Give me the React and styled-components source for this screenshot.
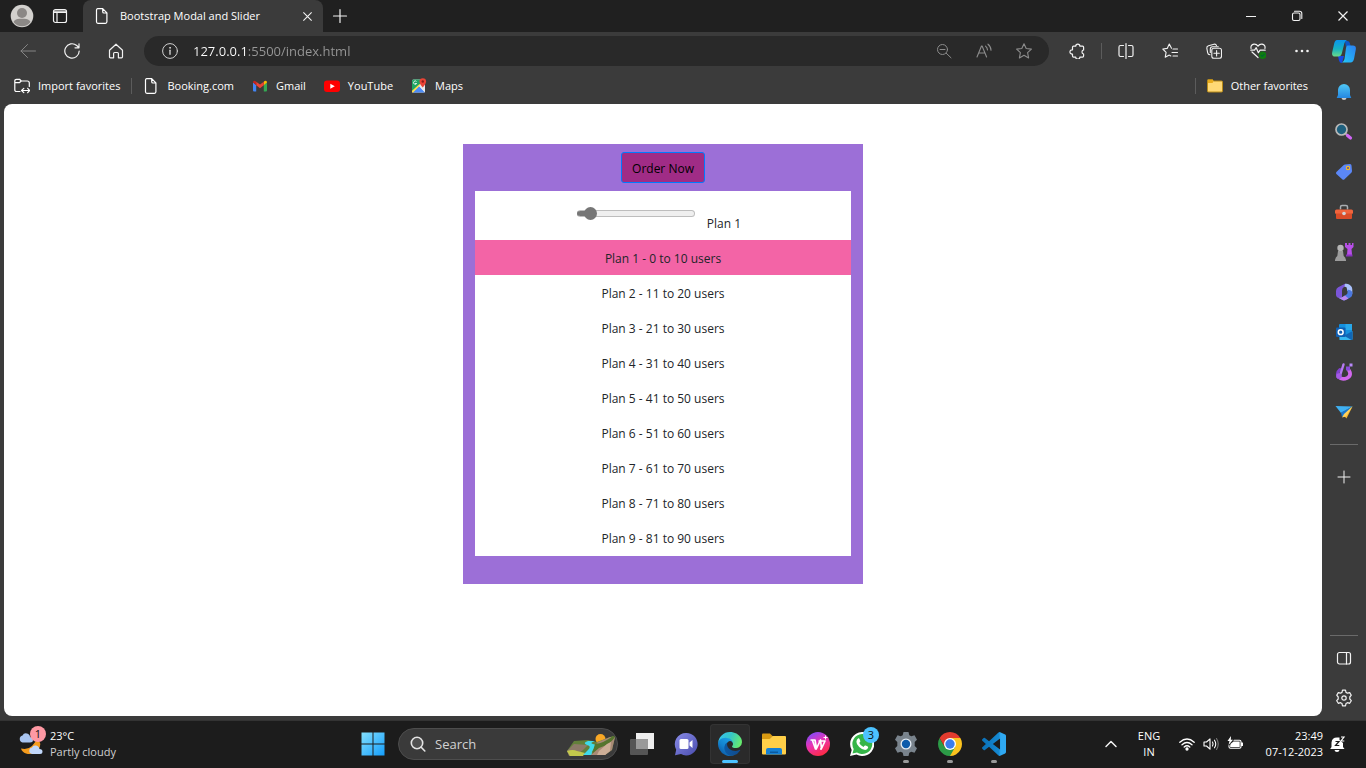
import React, { useState } from "react";
import styled, { createGlobalStyle } from "styled-components";

const GlobalStyle = createGlobalStyle`
  *, *::before, *::after { box-sizing: border-box; }
  body {
    margin: 0;
    background: #3b3b3b;
    color: #fff;
    font-family: "Open Sans", "Noto Sans", sans-serif;
    font-size: 11px;
    line-height: 16px;
  }
  button, input { font: inherit; color: inherit; }
  button { border: 0; padding: 0; background: none; }
  a { color: inherit; text-decoration: none; }
  ul { list-style: none; margin: 0; padding: 0; }
  svg { display: block; flex: none; }
`;

/* ---------- layout ---------- */

const Desktop = styled.div`
  display: flex;
  flex-direction: column;
  min-height: 100vh;
`;

const TabStrip = styled.header`
  display: flex;
  align-items: stretch;
  height: 32px;
  background: #202020;
`;

const IconButton = styled.button`
  display: flex;
  align-items: center;
  justify-content: center;
  flex: none;
  width: ${(p) => p.$w || 40}px;
  height: ${(p) => (p.$h ? `${p.$h}px` : "auto")};
  color: ${(p) => p.$color || "#f2f2f2"};
`;

const Tab = styled.div`
  display: flex;
  align-items: center;
  gap: 10px;
  width: 240px;
  margin-left: 7px;
  padding: 0 8px 0 11px;
  background: #3b3b3b;
  border-radius: 8px 8px 0 0;
`;

const TabTitle = styled.span`
  flex: 1;
  white-space: nowrap;
`;

const WindowControls = styled.div`
  display: flex;
  margin-left: auto;
`;

const BrowserBody = styled.div`
  display: flex;
  flex: 1;
`;

const BrowserMain = styled.div`
  display: flex;
  flex-direction: column;
  flex: 1;
  min-width: 0;
`;

const Toolbar = styled.nav`
  display: flex;
  align-items: center;
  gap: 4px;
  padding: 4px 0 0 8px;
`;

const AddressBar = styled.div`
  display: flex;
  align-items: center;
  flex: 1;
  height: 30px;
  margin: 0 4px;
  padding: 0 5px 0 6px;
  background: #292929;
  border-radius: 15px;
`;

const AddressInput = styled.input`
  flex: 1;
  min-width: 0;
  height: 30px;
  border: 0;
  padding: 0 0 0 3px;
  outline: 0;
  font-size: 13px;
  background: linear-gradient(90deg, #fff 57px, #989898 57px);
  background-clip: text;
  -webkit-background-clip: text;
  color: transparent;
`;

const Separator = styled.span`
  flex: none;
  width: 1px;
  height: 16px;
  background: #5c5c5c;
`;

const FavoritesBar = styled.nav`
  display: flex;
  align-items: center;
  height: 38px;
  padding: 2px 14px 0 14px;
  gap: 18px;
`;

const Favorite = styled.a`
  display: flex;
  align-items: center;
  gap: 8px;
  white-space: nowrap;
`;

const FavoriteGroup = styled.div`
  display: flex;
  align-items: center;
  gap: 11px;
  margin-left: ${(p) => (p.$end ? "auto" : 0)};
`;

const Page = styled.main`
  flex: 1;
  margin: 0 0 4px 4px;
  padding: 40px 16px;
  background: #fff;
  border-radius: 8px;
`;

const Sidebar = styled.aside`
  display: flex;
  flex-direction: column;
  align-items: center;
  width: 44px;
  padding-bottom: 2px;
`;

const SidebarRule = styled.hr`
  width: 28px;
  height: 1px;
  margin: ${(p) => (p.$bottom ? "auto 0 2px" : "12px 0")};
  border: 0;
  background: #6a6a6a;
`;

/* ---------- plan picker ---------- */

const PlanCard = styled.section`
  display: flex;
  flex-direction: column;
  align-items: center;
  gap: 8px;
  max-width: 400px;
  min-height: 440px;
  margin: 0 auto;
  padding: 8px 12px 28px;
  background: #9c6fd7;
  color: #212529;
  font-size: 12px;
`;

const OrderButton = styled.button`
  height: 31px;
  padding: 2px 10px 0;
  border: 1px solid #007bff;
  border-radius: 3px;
  background: #a02c86;
  color: #000;
`;

const PlanPanel = styled.div`
  display: flex;
  flex-direction: column;
  flex: 1;
  width: 100%;
  background: #fff;
`;

const SliderRow = styled.div`
  display: flex;
  justify-content: center;
  gap: 12px;
  height: 49px;
  padding: 16px 8px 0 0;
`;

const Slider = styled.input`
  appearance: none;
  width: 118px;
  height: 13px;
  margin: 0;
  background: none;
  &::-webkit-slider-runnable-track {
    height: 7px;
    border: 1px solid #bdbdbd;
    border-radius: 4px;
    background: linear-gradient(90deg, #767676 ${(p) => p.$fill}%, #efefef ${(p) => p.$fill}%);
    border-left-color: #767676;
  }
  &::-webkit-slider-thumb {
    appearance: none;
    width: 13px;
    height: 13px;
    margin-top: -4px;
    border-radius: 50%;
    background: #767676;
  }
`;

const SliderLabel = styled.label`
  align-self: flex-end;
  padding-bottom: 8px;
`;

const PlanList = styled.ul`
  display: grid;
  flex: 1;
  grid-auto-rows: 1fr;
`;

const PlanRow = styled.li`
  display: flex;
  align-items: center;
  justify-content: center;
  padding-top: 2px;
  background: ${(p) => (p.$active ? "#f364a6" : "transparent")};
`;

/* ---------- taskbar ---------- */

const Taskbar = styled.footer`
  display: grid;
  grid-template-columns: 1fr auto 1fr;
  align-items: center;
  height: 48px;
  box-shadow: inset 0 1px #333;
  background: #1c1c1c;
`;

const Weather = styled.button`
  display: flex;
  align-items: center;
  justify-self: start;
  gap: 6px;
  padding-left: 18px;
  text-align: left;
`;

const WeatherText = styled.span`
  display: block;
  color: ${(p) => (p.$muted ? "#cfcfcf" : "#fff")};
`;

const Dock = styled.div`
  display: flex;
  align-items: center;
  padding-left: 2px;
`;

const SearchBox = styled.label`
  display: flex;
  align-items: center;
  width: 220px;
  height: 32px;
  margin: 0 2px 0 4px;
  padding: 0 2px 0 11px;
  gap: 9px;
  border: 1px solid #4d4d4d;
  border-radius: 16px;
  background: #3a3a3a;
  input {
    flex: 1;
    min-width: 0;
    padding: 0;
    border: 0;
    outline: 0;
    background: none;
    font-size: 13px;
  }
  input::placeholder { color: #d2d2d2; opacity: 1; }
`;

const DockApp = styled.button`
  position: relative;
  display: flex;
  align-items: center;
  justify-content: center;
  width: 40px;
  height: 40px;
  margin: 0 2px;
  border-radius: 4px;
  background: ${(p) => (p.$state === "active" ? "#2a2a2a" : "transparent")};
  box-shadow: ${(p) => (p.$state === "active" ? "inset 0 0 0 1px #333" : "none")};
  &::after {
    content: "";
    display: ${(p) => (p.$state ? "block" : "none")};
    position: absolute;
    bottom: 1px;
    left: 50%;
    width: ${(p) => (p.$state === "active" ? 16 : 6)}px;
    height: 3px;
    margin-left: ${(p) => (p.$state === "active" ? -8 : -3)}px;
    border-radius: 2px;
    background: ${(p) => (p.$state === "active" ? "#4cc2ff" : "#9a9a9a")};
  }
`;

const IconWithBadge = styled.span`
  position: relative;
  display: block;
`;

const Badge = styled.span`
  position: absolute;
  top: -5px;
  right: ${(p) => (p.$dock ? -5 : -2)}px;
  width: 16px;
  height: 16px;
  border-radius: 50%;
  background: ${(p) => p.$bg};
  color: #111;
  text-align: center;
`;

const Tray = styled.div`
  display: flex;
  align-items: center;
  justify-self: end;
  gap: 18px;
  padding-right: 20px;
`;

const TrayIcons = styled.button`
  display: flex;
  align-items: center;
  gap: 8px;
`;

const TrayText = styled.button`
  min-width: ${(p) => p.$min}px;
  text-align: ${(p) => p.$align || "center"};
  span { display: block; }
`;

const Clock = styled.div`
  display: flex;
  align-items: center;
  gap: 7px;
`;

/* ---------- line icons ---------- */

const Line = ({ size = 16, sw = 1, children, ...rest }) => (
  <svg width={size} height={size} viewBox={`0 0 ${size} ${size}`} fill="none" stroke="currentColor"
    strokeWidth={sw} strokeLinecap="round" strokeLinejoin="round" aria-hidden="true" {...rest}>
    {children}
  </svg>
);

const FileIcon = () => (
  <Line sw={1.2}><path d="M3.5.7h5.2l4.2 4.2v8.900q0 1.500-1.500 1.500H3.900q-1.400 0-1.400-1.500V2.100Q2.500.7 3.900.7ZM8.700.9v2.800q0 1.300 1.300 1.300h2.800" /></Line>
);
const PlusIcon = () => <Line sw={1.2}><path d="M8 1.500v13M1.500 8h13" /></Line>;
const CloseIcon = ({ size = 12 }) => (
  <svg width={size} height={size} viewBox="0 0 12 12" stroke="currentColor" strokeWidth="1.2" aria-hidden="true">
    <path d="M1.500 1.500l9 9M10.500 1.500l-9 9" />
  </svg>
);
const TabActionsIcon = () => (
  <Line sw={1.2}><rect x="1.500" y="1.500" width="13" height="13" rx="2" /><path d="M2 3h12M2 4.300h12M5 5v9.500" /></Line>
);
const ProfileIcon = () => (
  <svg width="24" height="24" viewBox="0 0 24 24" aria-hidden="true">
    <circle cx="12" cy="12" r="11.300" fill="#d3d1ce" />
    <circle cx="12" cy="9" r="5" fill="#8b8886" />
    <path d="M3.500 18q2-3.200 6-3.200h5q4 0 6 3.200a10.500 10.500 0 0 1-17 0Z" fill="#8b8886" />
  </svg>
);
const MinimizeIcon = () => <Line><path d="M3 8.500h10" strokeLinecap="butt" /></Line>;
const RestoreIcon = () => (
  <Line sw={1.1}><rect x="3.500" y="5" width="7.500" height="7.500" rx="1.500" /><path d="M5.500 3.200h5q2.300 0 2.300 2.300v5" /></Line>
);
const BackIcon = () => <Line><path d="M15.500 8H1M7.500 1.500 1 8l6.500 6.500" /></Line>;
const RefreshIcon = () => <Line sw={1.2}><path d="M15.200 8A7.200 7.200 0 1 1 12.700 2.500L14.800 4.500M15 .8v4h-4" /></Line>;
const HomeIcon = () => (
  <Line sw={1.2}><path d="M1.500 7.200 8 1.200l6.500 6v6.600q0 1-1 1h-3.100v-4.300q0-1-1-1H6.600q-1 0-1 1v4.300H2.500q-1 0-1-1Z" /></Line>
);
const InfoIcon = () => (
  <Line><circle cx="8" cy="8" r="7.400" /><path d="M8 7.300v4" strokeWidth="1.400" /><circle cx="8" cy="4.800" r=".5" fill="currentColor" /></Line>
);
const ZoomOutIcon = () => <Line><circle cx="6.500" cy="6.500" r="5" /><path d="M10.300 10.300l4.700 4.500M4 6.500h5" /></Line>;
const ReadAloudIcon = () => (
  <Line sw={1.1}><path d="M1 14 5.500 3h.6l4.500 11M2.800 10h6M9.500 3.200q1.800 1.500 2 3.700M12 1.200q3 2.400 3 6" /></Line>
);
const StarIcon = () => (
  <Line sw={1.1}><path d="M8 .7l2.200 4.800 5.200.6-3.800 3.600 1 5.200L8 12.300l-4.600 2.600 1-5.200L.6 6.100l5.200-.6Z" /></Line>
);
const PuzzleIcon = () => (
  <Line sw={1.2}><path d="M4.500 3.200h2.200a2.100 2.100 0 0 1 4.200 0h2.700q1 0 1 1v2.700a2.100 2.100 0 0 0 0 4.100v2.100q0 1-1 1h-2.700a2.100 2.100 0 0 1-4.200 0H4.500q-1 0-1-1V11a2.100 2.100 0 1 1 0-4.100V4.200q0-1 1-1Z" /></Line>
);
const SplitIcon = () => (
  <Line sw={1.2}><path d="M5.500 2.500h-3Q1 2.500 1 4v8q0 1.500 1.500 1.500h3M10.500 2.500h3Q15 2.500 15 4v8q0 1.500-1.500 1.500h-3M8 .6v14.800" /></Line>
);
const FavoritesIcon = () => (
  <Line sw={1.1}><path d="M9.500 5.300 7.300 1 5.200 5.400.8 6l3.300 3.300-.9 5 4.100-2.200 1.500.9M11 6h4.500M10 9.500h5.500M11 13h4.500" /></Line>
);
const CollectionsIcon = () => (
  <Line sw={1.1}><path d="M4 11.800Q2 11.500 1.700 9.800L.8 5.200Q.6 3.200 2.500 2.700L8 1.200q1.800-.4 2.500 1.300M4.300 9.500V6q0-2.200 2.200-2.200h5.800" /><rect x="5.800" y="5.300" width="9.700" height="10" rx="2" /><path d="M10.600 7.600v5.400M8 10.300h5.300" /></Line>
);
const HeartIcon = () => (
  <Line sw={1.2}>
    <path d="M1 5.500q-.7-3.600 3-4.300 2.500-.2 4 2 1.500-2.200 4-2 3.700.7 3 4.300M2 9l6 5.500M.8 7.200h3.700l1.700-2.500 2.200 5 1.700-2.500h5.100" />
    <circle cx="12.700" cy="12.300" r="3.700" fill="#107c10" stroke="none" />
    <path d="M11.200 12.400l1 1 2-2" stroke="#063" />
  </Line>
);
const DotsIcon = () => (
  <Line><g fill="currentColor" stroke="none"><circle cx="2.500" cy="8" r="1.300" /><circle cx="8" cy="8" r="1.300" /><circle cx="13.500" cy="8" r="1.300" /></g></Line>
);
const ImportIcon = () => (
  <Line sw={1.2}><path d="M6 13.500H2.500Q.8 13.500.8 12V3Q.8 1.300 2.500 1.300h3L7.300 3h6q2 0 2 2v3.500M.8 4.700h4.500L7.300 3M8 12.500h7.500M9.800 10.300l-2.200 2.200 2.200 2.200M13.700 10.300l2 2.200-2 2.200" /></Line>
);
const PanelIcon = () => <Line sw={1.2}><rect x="1.500" y="2.500" width="13" height="11.500" rx="2" /><path d="M10.500 2.500V14" /></Line>;
const GearIcon = () => (
  <Line size={18} sw={1.2}>
    <path d="M7.500 1.200h3l.5 2.200 1.500.8 2.200-.6 1.600 2.600L14.800 8v2l1.500 1.700-1.600 2.600-2.200-.6-1.500.9-.5 2.200h-3L7 14.600l-1.500-.9-2.200.6-1.600-2.600L3.200 10V8L1.700 6.200l1.600-2.600 2.200.6L7 3.400Z" />
    <circle cx="9" cy="9" r="2.200" />
  </Line>
);

/* ---------- favourites icons ---------- */

const GmailIcon = () => (
  <svg width="16" height="16" viewBox="0 0 16 16" aria-hidden="true">
    <path d="M1 4.500 4.200 7v6.500H2q-1 0-1-1Z" fill="#4285f4" />
    <path d="M11.800 7 15 4.500v8q0 1-1 1h-2.200Z" fill="#34a853" />
    <path d="M11.800 3.700l.8-.6Q15 2 15 4.500L11.800 7.200Z" fill="#fbbc04" />
    <path d="M4.200 3.700 8 6.600l3.800-2.900v3.500L8 10.200 4.200 7.200Z" fill="#ea4335" />
    <path d="M1 4.500Q1 2 3.400 3.100l.8.6v3.500Z" fill="#c5221f" />
  </svg>
);
const YouTubeIcon = () => (
  <svg width="16" height="16" viewBox="0 0 16 16" aria-hidden="true">
    <rect y="2.500" width="16" height="11.500" rx="3" fill="#f00" /><path d="M6.300 5.800 10.800 8.200l-4.500 2.500Z" fill="#fff" />
  </svg>
);
const MapsIcon = () => (
  <svg width="16" height="16" viewBox="0 0 16 16" aria-hidden="true">
    <rect x="1" y="1.500" width="13" height="13" rx="1.500" fill="#e8eaed" />
    <path d="M1 3q0-1.500 1.500-1.500H10L9 7 1 14Z" fill="#1fa463" />
    <path d="M1.500 14.500 8 8l6 6.500Z" fill="#4c8bf5" />
    <path d="M1 12.800 8.500 6l1 1L2 14.500H1Z" fill="#ffda48" />
    <path d="M8 8l1-1 5 5.500v2Z" fill="#e8eaed" />
    <path d="M5.500 3.500a1.700 1.700 0 1 0 .2 2H4" fill="none" stroke="#fff" strokeWidth=".8" />
    <path d="M11.700 9.500Q8.500 6 8.500 3.600a3.300 3.300 0 0 1 6.600 0Q15 6 11.700 9.500Z" fill="#ea4335" /><circle cx="11.800" cy="3.500" r="1.200" fill="#8c1d18" />
  </svg>
);
const FolderIcon = () => (
  <svg width="16" height="16" viewBox="0 0 16 16" aria-hidden="true">
    <path d="M.5 13V2.500Q.5 1.500 1.500 1.500h4l1 1.500h8q1 0 1 1V13q0 1-1 1h-13q-1 0-1-1Z" fill="#ffd976" stroke="#b88a18" />
    <path d="M1 2h4.500l1 1.500L5.500 5H1Z" fill="#e8ab1c" />
  </svg>
);

/* ---------- sidebar icons ---------- */

const CopilotIcon = () => (
  <svg width="24" height="24" viewBox="0 0 24 24" aria-hidden="true">
    <defs>
      <linearGradient id="cp1" x1="0" y1="0" x2="0" y2="1"><stop stopColor="#0a95ee" /><stop offset=".55" stopColor="#18b3c0" /><stop offset="1" stopColor="#6bdc88" /></linearGradient>
      <linearGradient id="cp2" x1="1" y1="0" x2="0" y2="1"><stop stopColor="#2b7ff0" /><stop offset="1" stopColor="#22c8f8" /></linearGradient>
    </defs>
    <path d="M6 16h6l-2 7Q7.500 23 7 20.500Z" fill="#174ae4" />
    <path d="M13 1h2.500q1.800 0 2.300 2l1 3.500h-5Z" fill="#0c59c9" />
    <path d="M5 0h10q-2 .8-2.700 3.500L9.800 13.500q-.8 3-3.500 3H3Q-.6 16.500.2 12.300L2.200 3.500Q3 0 5 0Z" fill="url(#cp1)" />
    <path d="M15.500 5.500H21q3.400 0 2.800 4l-1.700 9Q21.300 22.500 18.500 22.500H10q1.800-.8 2.500-3.500L14 8q.3-2.500 1.500-2.500Z" fill="url(#cp2)" />
  </svg>
);
const BellIcon = () => (
  <svg width="16" height="18" viewBox="0 0 16 18" aria-hidden="true">
    <defs><linearGradient id="bell" x1="0" y1="0" x2="0" y2="1"><stop stopColor="#50c8f5" /><stop offset="1" stopColor="#2486e0" /></linearGradient></defs>
    <path d="M2 12V7a6 6 0 0 1 12 0v5L15.300 15H.7Z" fill="url(#bell)" /><path d="M5.500 15h5q-.3 2-2.500 2t-2.500-2Z" fill="#c9c9c9" />
  </svg>
);
const SearchColorIcon = () => (
  <svg width="18" height="18" viewBox="0 0 18 18" aria-hidden="true">
    <path d="M10.500 10.500l2 2" stroke="#aaa" strokeWidth="2" /><path d="M12.500 12.500l3 2.500" stroke="#d065f5" strokeWidth="3.200" strokeLinecap="round" />
    <circle cx="6.500" cy="6.500" r="5.500" fill="#1e607e" stroke="#b9b9b9" strokeWidth="1.700" />
  </svg>
);
const TagIcon = () => (
  <svg width="18" height="18" viewBox="0 0 18 18" aria-hidden="true">
    <path d="M10 1.500 15 1q1.500 0 1.500 1.500L17 8q0 1-.7 1.700L9.500 16.300q-1 1-2 .1L1.400 11q-.9-1 0-2L8.500 2.200q.7-.6 1.500-.7Z" fill="#5b87f7" />
    <circle cx="13" cy="5" r="1.600" fill="#5148b8" stroke="#f5bd23" strokeWidth="1.200" />
  </svg>
);
const ToolboxIcon = () => (
  <svg width="18" height="18" viewBox="0 0 18 18" aria-hidden="true">
    <path d="M5.500 6.500V4Q5.500 2.500 7 2.500h4q1.500 0 1.500 1.500v2.500" fill="none" stroke="#a9adb0" strokeWidth="1.500" />
    <rect y="6.500" width="18" height="4.500" rx="1.500" fill="#f0643c" /><path d="M1 10.500h16v4.500q0 1-1 1H2q-1 0-1-1Z" fill="#d94c28" /><circle cx="9" cy="10.500" r="1.800" fill="#d2d5d8" />
  </svg>
);
const ChessIcon = () => (
  <svg width="20" height="20" viewBox="0 0 20 20" aria-hidden="true">
    <path d="M11 1h2v2h1.500V1h2v2H18V1h1.500v4l-2 2 .6 6H13l.5-6L11 5Z" fill="#b74ee8" />
    <path d="M12 12.500h6.500v2H12Z" fill="#8732bd" />
    <circle cx="6.500" cy="6" r="3.200" fill="#b5b5b5" /><path d="M4 9h5l.7 5q1.700 1 2.300 4v1H1v-1q.6-3 2.300-4Z" fill="#9c9c9c" />
  </svg>
);
const M365Icon = () => (
  <svg width="18" height="18" viewBox="0 0 18 18" aria-hidden="true">
    <path d="M10 .8 3.200 4.300Q1 5.500 1 8v4q.3 3 4 3l2-1V7.500Q7 5 9 4l4-2Z" fill="#7a55d8" />
    <path d="M10 .8q2.500-.6 4.500 1L16 3q1.300 1 1.300 3.500V11L12 7.500V6Q12 3.500 9.500 3.800Z" fill="#a9c1fb" />
    <path d="M17.300 9v2.500q0 2-2 3L10.500 17q-1.500.8-3 0L3 14.600q2.500.6 4.500-.6l4-2.500q1-.7 1-2V6.500l3.300 1Z" fill="#4b78df" />
    <path d="M3 14.600q2.500.6 4.500-.6l2.500-1.500 3.500 3-3 1.500q-1.500.8-3 0Z" fill="#b987ef" />
  </svg>
);
const OutlookIcon = () => (
  <svg width="18" height="18" viewBox="0 0 18 18" aria-hidden="true">
    <rect x="4" y="1" width="13" height="12" rx="1" fill="#1490df" /><path d="M10.500 1H17v6h-6.500Z" fill="#28a8ea" /><path d="M4 8l7 4.500L17.500 8v8q0 1-1 1h-12Z" fill="#35b8f1" /><path d="M17.500 8v8q0 1-1 1L9 12.800Z" fill="#1066b5" />
    <rect x="1" y="4.500" width="9.500" height="9.500" rx="1" fill="#0f5fb3" /><circle cx="5.700" cy="9.200" r="2.400" fill="none" stroke="#fff" strokeWidth="1.500" />
  </svg>
);
const DesignerIcon = () => (
  <svg width="20" height="20" viewBox="0 0 20 20" fill="none" aria-hidden="true">
    <path d="M15 8.500Q17.800 13 13.500 15.800 8 18.300 4.500 15" stroke="#d267ee" strokeWidth="3.600" strokeLinecap="round" />
    <path d="M4.500 15.500Q1.800 11 6 7.500" stroke="#8241d0" strokeWidth="3" strokeLinecap="round" />
    <path d="M9.500 2.500 6.500 12" stroke="#b67af2" strokeWidth="2.400" strokeLinecap="round" /><path d="M12 4.500h4v4h-4Z" fill="#8a4adb" /><path d="M15.500 1.500h3v3h-3Z" fill="#b889fa" />
    <circle cx="5" cy="14" r="2.800" fill="#a45ae5" />
  </svg>
);
const PlaneIcon = () => (
  <svg width="18" height="18" viewBox="0 0 18 18" aria-hidden="true">
    <path d="M.5 3 17.500 3.500 6 10Z" fill="#3fb0f2" /><path d="M17.500 3.500 11.500 15.500 6.500 10Z" fill="#f3b42b" /><path d="M17.500 3.500 6 9.500 7 14Z" fill="#1976ce" /><path d="M17.500 3.500 9 11l-2 3.500 4-1Z" fill="#ffd15c" />
  </svg>
);

/* ---------- taskbar icons ---------- */

const WeatherIcon = () => (
  <svg width="26" height="26" viewBox="0 0 26 26" aria-hidden="true">
    <path d="M19 6q6 7 1 13-5 5.500-12 3.500-4-1.500-5-5 7 1.500 11-2.500T19 6Z" fill="#f49b1c" />
    <path d="M4.500 11.500a3.600 3.600 0 0 1 0-7Q6 1.500 9 2.500q3 1 3 3.500 3 .5 3 3t-3 2.500Z" fill="#a8c4f0" />
    <path d="M14 23a3.300 3.300 0 0 1 0-6.500q1-2.500 4-2 3 .5 3.500 3.500 3 0 3 2.500T22 23Z" fill="#c1d7fa" />
  </svg>
);
const StartIcon = () => (
  <svg width="24" height="24" viewBox="0 0 24 24" aria-hidden="true">
    <defs><linearGradient id="win" x1="0" y1="0" x2="1" y2="1"><stop stopColor="#83dffd" /><stop offset="1" stopColor="#149efc" /></linearGradient></defs>
    <path d="M.5.500h11v11H.5ZM12.500.500h11v11h-11ZM.5 12.500h11v11H.5ZM12.500 12.500h11v11h-11Z" fill="url(#win)" />
  </svg>
);
const SearchIcon = () => (
  <svg width="16" height="16" viewBox="0 0 16 16" fill="none" stroke="#e3e3e3" strokeWidth="1.600" strokeLinecap="round" aria-hidden="true"><circle cx="7" cy="7" r="5.700" fill="#505050" /><path d="M11.200 11.200l3.600 3.800" /></svg>
);
const SceneryIcon = () => (
  <svg width="48" height="24" viewBox="0 0 48 24" aria-hidden="true">
    <circle cx="33.500" cy="7" r="5" fill="#f9a825" />
    <path d="M7 9l14-1 9 2 16-6 2 1-3 13-7 5H2l-2-4Z" fill="#62803a" />
    <path d="M0 19l7-7 14 1-5 5-8 6H2Z" fill="#8c7a68" />
    <path d="M0 19q6-2 10 0l8 2-2 3H3Z" fill="#c3c94c" />
    <path d="M21 9q-6 2-1 4 5 1 1 5l-5 5h9q-1-4 3-7t-2-4q-4-1 2-3Z" fill="#3fdaea" />
    <path d="M29 11 43 5h5l-3 13-7 5H24q4-8 10-9Z" fill="#a98a76" /><path d="M28 12q9-1 18-8l2 1q-4 7-16 11l-7 6Z" fill="#55752e" /><path d="M32 19l8-7 4-2-1 9-5 4h-8Z" fill="#cdae97" />
  </svg>
);
const TaskViewIcon = () => (
  <svg width="24" height="24" viewBox="0 0 24 24" aria-hidden="true">
    <path d="M6 1h18v16H6Z" fill="#eee" /><rect y="7" width="18" height="16" rx="1" fill="#555" /><path d="M6 7h12v10H6Z" fill="#999" />
  </svg>
);
const ChatIcon = () => (
  <svg width="24" height="24" viewBox="0 0 24 24" aria-hidden="true">
    <defs><linearGradient id="chat" x1="0" y1="0" x2="1" y2="1"><stop stopColor="#8a8ce8" /><stop offset="1" stopColor="#494cad" /></linearGradient></defs>
    <path d="M12 1a11.200 11.200 0 1 1-5 21L1 23.200l1.200-5.500A11.200 11.200 0 0 1 12 1Z" fill="url(#chat)" />
    <rect x="5.500" y="7" width="9" height="10" rx="1.500" fill="#fff" /><path d="M15.500 10.500 18.500 8v8l-3-2.500Z" fill="#fff" />
  </svg>
);
const EdgeIcon = () => (
  <svg width="24" height="24" viewBox="0 0 256 256" aria-hidden="true">
    <defs>
      <linearGradient id="eg1" x1="0" y1="0" x2="1" y2="0"><stop stopColor="#0c59a4" /><stop offset="1" stopColor="#114a8b" /></linearGradient>
      <linearGradient id="eg2" x1=".8" y1=".2" x2=".3" y2="1"><stop stopColor="#1b9de2" /><stop offset=".5" stopColor="#1383cf" /><stop offset="1" stopColor="#0c59a4" /></linearGradient>
      <linearGradient id="eg3" x1="0" y1=".2" x2="1" y2=".5"><stop stopColor="#35c1f1" /><stop offset=".5" stopColor="#36c6c5" /><stop offset="1" stopColor="#66eb6e" /></linearGradient>
    </defs>
    <path fill="url(#eg1)" d="M231 190.500c-3.400 1.800-6.900 3.400-10.500 4.700a101.500 101.500 0 0 1-35.900 6.500c-47.300 0-88.500-32.500-88.500-74.300.1-11.400 6.400-21.900 16.400-27.300-42.800 1.800-53.800 46.400-53.800 72.500 0 74 68.100 81.400 82.800 81.400 7.900 0 19.800-2.300 27-4.600l1.300-.4a128.300 128.300 0 0 0 66.600-52.800c1.200-1.900.6-4.300-1.200-5.500-1.300-.8-2.900-.9-4.200-.2z" />
    <path fill="url(#eg2)" d="M105.700 241.400a79.200 79.200 0 0 1-22.700-21.300 80.700 80.700 0 0 1 29.500-120c3.200-1.500 8.500-4.100 15.600-4a32.400 32.400 0 0 1 25.700 13 31.900 31.900 0 0 1 6.300 18.700c0-.2 24.500-79.600-80-79.600-43.900 0-80 41.600-80 78.200-.2 19.300 4 38.500 12.100 56a128 128 0 0 0 156.400 67.100 75.500 75.500 0 0 1-62.800-8z" />
    <path fill="url(#eg3)" d="M152.300 148.900c-.9 1-3.400 2.500-3.400 5.600 0 2.600 1.700 5.200 4.800 7.300 14.300 10 41.400 8.600 41.500 8.600 10.700 0 21.100-2.900 30.300-8.300a61.400 61.400 0 0 0 30.400-52.900c.3-22.400-8-37.300-11.300-43.900C223.500 23.900 177.700 0 128 0A128 128 0 0 0 0 126.200c.5-36.500 36.800-66 80-66 3.500 0 23.500.3 42 10.100 16.300 8.600 24.900 18.900 30.800 29.200 6.200 10.700 7.300 24.100 7.300 29.500 0 5.300-2.700 13.300-7.800 19.900z" />
  </svg>
);
const ExplorerIcon = () => (
  <svg width="24" height="24" viewBox="0 0 24 24" aria-hidden="true">
    <path d="M0 2.500Q0 1.500 1 1.500h7L10.500 4 8 7H0Z" fill="#d99a12" /><path d="M0 7h7.500l3-3H23q1 0 1 1v16.500q0 1-1 1H1q-1 0-1-1Z" fill="#ffcf48" /><path d="M4 22.500V18q0-2 2-2h12q2 0 2 2v4.500Z" fill="#1580d4" /><path d="M8 19.500h8v1.500H8Z" fill="#0b5a9f" />
  </svg>
);
const WpsIcon = () => (
  <svg width="24" height="24" viewBox="0 0 24 24" aria-hidden="true">
    <defs><linearGradient id="wps" x1=".2" y1="0" x2=".7" y2="1"><stop stopColor="#7a4dff" /><stop offset=".45" stopColor="#e833b5" /><stop offset="1" stopColor="#ff2a3c" /></linearGradient></defs>
    <circle cx="12" cy="12" r="12" fill="url(#wps)" />
    <path d="M4.500 8h4.500l1.500 8.500L14.500 8l1 8.500L19 9h-6.500M6.500 8.500 9.500 17h1.500M14 17h2" fill="none" stroke="#fff" strokeWidth="1.700" strokeLinejoin="round" /><path d="M19.500 3.500v4M17.500 5.500h4" stroke="#fff" />
  </svg>
);
const WhatsAppIcon = () => (
  <svg width="24" height="24" viewBox="0 0 24 24" aria-hidden="true">
    <path d="M12 0a12 12 0 1 1-5.500 22.500L0 24l1.700-6A12 12 0 0 1 12 0Z" fill="#fff" /><path d="M12 2a10 10 0 1 1-5 18.500L2.500 21.500 3.700 17A10 10 0 0 1 12 2Z" fill="#35b548" />
    <path d="M8.300 6.300q.8-.2 1.200.7l.8 1.900q.2.700-.3 1.200l-.7.900q1.200 2.700 4.200 4l1-1.200q.5-.6 1.200-.2l2 1q.6.400.4 1.200-.6 2-2.900 2.100-3 0-6-2.900-2.900-2.900-2.800-5.300.1-2.300 1.900-3.400Z" fill="#fff" />
  </svg>
);
const SettingsAppIcon = () => (
  <svg width="24" height="24" viewBox="0 0 24 24" aria-hidden="true">
    <path d="M9.500 0h5l.8 3.200 2 1.100 3.200-1L23 7.700 20.700 10v4l2.300 2.300-2.500 4.400-3.200-1-2 1.100-.8 3.200h-5l-.8-3.200-2-1.100-3.200 1L1 16.300 3.300 14v-4L1 7.700l2.500-4.400 3.200 1 2-1.100Z" fill="#79838c" />
    <circle cx="12" cy="12" r="5.500" fill="#e6edf3" /><circle cx="12" cy="12" r="4.200" fill="#0e5cab" />
  </svg>
);
const ChromeIcon = () => (
  <svg width="24" height="24" viewBox="0 0 24 24" aria-hidden="true">
    <path d="M12 6h10.390A12 12 0 0 1 12 24Z" fill="#fcc31e" />
    <path d="M1.610 6A12 12 0 0 0 12 24l5.200-9L12 12 6.800 15Z" fill="#2c9b47" />
    <path d="M1.610 6 6.800 15 12 12V6h10.390A12 12 0 0 0 1.610 6Z" fill="#e23b2e" />
    <circle cx="12" cy="12" r="6" fill="#fff" /><circle cx="12" cy="12" r="4.700" fill="#3a7cec" />
  </svg>
);
const CodeIcon = () => (
  <svg width="24" height="24" viewBox="0 0 24 24" aria-hidden="true">
    <defs><linearGradient id="code"><stop stopColor="#0a70b8" /><stop offset=".7" stopColor="#1589d1" /><stop offset=".78" stopColor="#2fa9f2" /></linearGradient></defs>
    <path fill="url(#code)" d="M23.150 2.587L18.210.210a1.494 1.494 0 0 0-1.705.290l-9.460 8.630-4.120-3.128a.999.999 0 0 0-1.276.057L.327 7.261A1 1 0 0 0 .326 8.740L3.899 12 .326 15.260a1 1 0 0 0 .001 1.479L1.650 17.940a.999.999 0 0 0 1.276.057l4.120-3.128 9.460 8.630a1.492 1.492 0 0 0 1.704.290l4.942-2.377A1.500 1.500 0 0 0 24 20.060V3.939a1.500 1.500 0 0 0-.850-1.352zm-5.146 14.861L10.826 12l7.178-5.448v10.896z" />
  </svg>
);
const ChevronUpIcon = () => <Line sw={1.5}><path d="M3 10.500l5-5 5 5" /></Line>;
const WifiIcon = () => (
  <Line sw={1.3}><path d="M.8 6.200q7.200-6.500 14.400 0M3 8.700q5-4.400 10 0M5.200 11q2.800-2.500 5.600 0" /><circle cx="8" cy="13" r="1" fill="currentColor" /></Line>
);
const SpeakerIcon = () => (
  <Line sw={1.1}><path d="M1 6h2.500L7 2.800v10.400L3.500 10H1ZM9.500 6q1.200 2 0 4M11.500 4.200q2.500 3.800 0 7.600" /><path d="M13.500 2.500q3.500 5.500 0 11" stroke="#777" /></Line>
);
const BatteryIcon = () => (
  <Line sw={1.1}><path d="M7 4.200h5.500q1.500 0 1.500 1.500v5q0 1.500-1.500 1.500h-9Q2 12.200 2 10.700V9.500M14.500 7v2.500h1V7Z" /><path d="M4 7.500 6.500 5.500H12.700v5.500h-9.500V9Z" fill="currentColor" stroke="none" /><path d="M4 0 .5 5h2L1.500 9 6 3.700H3.800Z" fill="currentColor" stroke="none" /></Line>
);
const QuietBellIcon = () => (
  <svg width="16" height="16" viewBox="0 0 16 16" aria-hidden="true">
    <path d="M1.500 11V6.500Q2 1.500 7 1.500h2.500V4L13 7v4l1.500 2H.2ZM4.500 14h5q-.3 2-2.500 2t-2.500-2Z" fill="#fff" />
    <path d="M5.500 5.500H9L5.500 9.500H9.300" fill="none" stroke="#1c1c1c" strokeWidth="1.200" /><path d="M11 1h3l-3 4h3.300" fill="none" stroke="#fff" strokeWidth="1.200" />
  </svg>
);

/* ---------- data ---------- */

const plans = Array.from({ length: 9 }, (_, i) => ({
  id: i + 1,
  label: `Plan ${i + 1} - ${i === 0 ? 0 : i * 10 + 1} to ${(i + 1) * 10} users`,
}));

const favorites = [
  ["Gmail", GmailIcon],
  ["YouTube", YouTubeIcon],
  ["Maps", MapsIcon],
];

const sidebarApps = [
  ["Copilot", CopilotIcon],
  ["Notifications", BellIcon],
  ["Search", SearchColorIcon],
  ["Shopping", TagIcon],
  ["Tools", ToolboxIcon],
  ["Games", ChessIcon],
  ["Microsoft 365", M365Icon],
  ["Outlook", OutlookIcon],
  ["Designer", DesignerIcon],
  ["Drop", PlaneIcon],
];

const addressActions = [
  ["Zoom", ZoomOutIcon],
  ["Read aloud", ReadAloudIcon],
  ["Add to favorites", StarIcon],
];

const toolbarActions = [
  ["Split screen", SplitIcon],
  ["Favorites", FavoritesIcon],
  ["Collections", CollectionsIcon],
  ["Browser essentials", HeartIcon],
  ["Settings and more", DotsIcon],
];

const dockApps = [
  ["Task view", TaskViewIcon],
  ["Chat", ChatIcon],
  ["Edge", EdgeIcon, "active"],
  ["File Explorer", ExplorerIcon],
  ["WPS Office", WpsIcon],
  ["WhatsApp", WhatsAppIcon, undefined, "3"],
  ["Settings", SettingsAppIcon, "open"],
  ["Chrome", ChromeIcon, "open"],
  ["Visual Studio Code", CodeIcon, "open"],
];

function PlanPicker() {
  const [users, setUsers] = useState(5);
  const current = Math.max(1, Math.ceil(users / 10));
  return (
    <PlanCard>
      <OrderButton type="button">Order Now</OrderButton>
      <PlanPanel>
        <SliderRow>
          <Slider id="users" type="range" min="0" max="90" value={users} $fill={(users / 90) * 89 + 5}
            onChange={(e) => setUsers(Number(e.target.value))} />
          <SliderLabel htmlFor="users">Plan {current}</SliderLabel>
        </SliderRow>
        <PlanList>
          {plans.map((p) => (
            <PlanRow key={p.id} $active={p.id === current}>{p.label}</PlanRow>
          ))}
        </PlanList>
      </PlanPanel>
    </PlanCard>
  );
}

export default function App() {
  return (
    <>
      <GlobalStyle />
      <Desktop>
        <TabStrip>
          <IconButton $w={44} aria-label="Profile"><ProfileIcon /></IconButton>
          <IconButton $w={32} aria-label="Tab actions"><TabActionsIcon /></IconButton>
          <Tab>
            <FileIcon />
            <TabTitle>Bootstrap Modal and Slider</TabTitle>
            <IconButton $w={16} aria-label="Close tab"><CloseIcon size={11} /></IconButton>
          </Tab>
          <IconButton $w={34} aria-label="New tab"><PlusIcon /></IconButton>
          <WindowControls>
            <IconButton $w={46} aria-label="Minimize"><MinimizeIcon /></IconButton>
            <IconButton $w={46} aria-label="Restore"><RestoreIcon /></IconButton>
            <IconButton $w={46} aria-label="Close"><CloseIcon /></IconButton>
          </WindowControls>
        </TabStrip>
        <BrowserBody>
          <BrowserMain>
            <Toolbar>
              <IconButton $h={30} $color="#858585" aria-label="Back"><BackIcon /></IconButton>
              <IconButton $h={30} aria-label="Refresh"><RefreshIcon /></IconButton>
              <IconButton $h={30} aria-label="Home"><HomeIcon /></IconButton>
              <AddressBar>
                <IconButton $h={30} $color="#d0d0d0" aria-label="Site information"><InfoIcon /></IconButton>
                <AddressInput type="text" aria-label="Address" defaultValue="127.0.0.1:5500/index.html" />
                {addressActions.map(([name, Icon]) => (
                  <IconButton key={name} $h={30} $color="#8c8c8c" aria-label={name}><Icon /></IconButton>
                ))}
              </AddressBar>
              <IconButton $h={30} aria-label="Extensions"><PuzzleIcon /></IconButton>
              <Separator />
              {toolbarActions.map(([name, Icon]) => (
                <IconButton key={name} $h={30} aria-label={name}><Icon /></IconButton>
              ))}
            </Toolbar>
            <FavoritesBar>
              <FavoriteGroup>
                <Favorite href="#import"><ImportIcon />Import favorites</Favorite>
                <Separator />
                <Favorite href="#booking"><FileIcon />Booking.com</Favorite>
              </FavoriteGroup>
              {favorites.map(([name, Icon]) => (
                <Favorite key={name} href={`#${name}`}><Icon />{name}</Favorite>
              ))}
              <FavoriteGroup $end>
                <Separator />
                <Favorite href="#other"><FolderIcon />Other favorites</Favorite>
              </FavoriteGroup>
            </FavoritesBar>
            <Page><PlanPicker /></Page>
          </BrowserMain>
          <Sidebar>
            {sidebarApps.map(([name, Icon]) => (
              <IconButton key={name} $h={40} aria-label={name}><Icon /></IconButton>
            ))}
            <SidebarRule />
            <IconButton $h={40} aria-label="Customize"><Line><path d="M8 2v12M2 8h12" /></Line></IconButton>
            <SidebarRule $bottom />
            <IconButton $h={40} aria-label="Toggle sidebar"><PanelIcon /></IconButton>
            <IconButton $h={40} aria-label="Sidebar settings"><GearIcon /></IconButton>
          </Sidebar>
        </BrowserBody>
        <Taskbar>
          <Weather>
            <IconWithBadge><WeatherIcon /><Badge $bg="#ff99a4">1</Badge></IconWithBadge>
            <span>
              <WeatherText>23°C</WeatherText>
              <WeatherText $muted>Partly cloudy</WeatherText>
            </span>
          </Weather>
          <Dock>
            <IconButton $w={42} $h={40} aria-label="Start"><StartIcon /></IconButton>
            <SearchBox>
              <SearchIcon />
              <input type="text" placeholder="Search" aria-label="Search" />
              <SceneryIcon />
            </SearchBox>
            {dockApps.map(([name, Icon, state, badge]) => (
              <DockApp key={name} $state={state} aria-label={name}>
                <IconWithBadge>
                  <Icon />
                  {badge && <Badge $dock $bg="#4cc2ff">{badge}</Badge>}
                </IconWithBadge>
              </DockApp>
            ))}
          </Dock>
          <Tray>
            <IconButton $w={16} aria-label="Hidden icons"><ChevronUpIcon /></IconButton>
            <TrayText $min={24}><span>ENG</span><span>IN</span></TrayText>
            <TrayIcons aria-label="Network, volume and battery"><WifiIcon /><SpeakerIcon /><BatteryIcon /></TrayIcons>
            <Clock>
              <TrayText $min={62} $align="right"><span>23:49</span><span>07-12-2023</span></TrayText>
              <QuietBellIcon />
            </Clock>
          </Tray>
        </Taskbar>
      </Desktop>
    </>
  );
}
